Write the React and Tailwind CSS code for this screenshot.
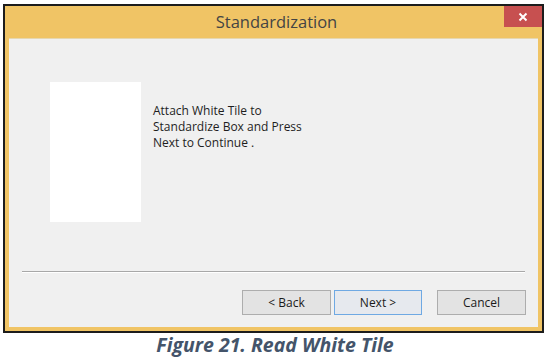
import React from 'react';

const uiFont = { fontFamily: '"Open Sans", "Noto Sans", sans-serif' };

function WinButton({ children, focused }) {
  return (
    <button
      className={
        focused
          ? 'w-[88px] h-[25px] border border-[#6fa9e3] bg-[#e6e9ee] text-[12px] text-[#1a1a1a]'
          : 'w-[89px] h-[25px] border border-[#adadad] bg-[#e3e3e3] text-[12px] text-[#1a1a1a]'
      }
      style={uiFont}
    >
      {children}
    </button>
  );
}

export default function App() {
  return (
    <div className="w-[550px] h-[358px] bg-white overflow-hidden">
      {/* Fenêtre */}
      <div className="ml-[3px] mt-[4px] w-[541px] h-[329px] border-2 border-[#1c1c1c] bg-[#f0c465] flex flex-col">
        {/* Barre de titre */}
        <div className="relative h-[32px] flex items-center justify-center">
          <span className="text-[16.5px] text-[#444444] pl-[6px]" style={uiFont}>
            Standardization
          </span>
          <div className="absolute right-0 top-0 w-[38px] h-[21px] bg-[#c75050] flex items-center justify-center">
            <svg width="10" height="10" viewBox="0 0 10 10">
              <path d="M1.5 1.5 L8.5 8.5 M8.5 1.5 L1.5 8.5" stroke="white" strokeWidth="2" />
            </svg>
          </div>
        </div>

        {/* Contenu */}
        <div className="ml-[4px] mr-[4px] mb-[4px] flex-1 bg-[#f0f0f0] border-t border-[#e6d7b0] flex flex-col">
          <div className="flex pl-[41px] pt-[43px]">
            <div className="w-[91px] h-[140px] bg-white" />
            <p className="ml-[12px] mt-[21px] text-[12px] leading-[16px] text-[#1e1e1e]" style={uiFont}>
              Attach White Tile to<br />
              Standardize Box and Press<br />
              Next to Continue .
            </p>
          </div>

          <div className="mx-[13px] mt-[49px] h-[2px] border-t border-[#a8a8a8] border-b border-b-white" />

          <div className="flex justify-end gap-[3px] pr-[12px] mt-[17px]">
            <WinButton>&lt; Back</WinButton>
            <WinButton focused>Next &gt;</WinButton>
            <div className="w-[9px]" />
            <WinButton>Cancel</WinButton>
          </div>
        </div>
      </div>

      {/* Légende */}
      <p
        className="mt-[0px] text-center text-[19.5px] font-bold italic text-[#44546a] leading-[24px]"
        style={uiFont}
      >
        Figure 21. Read White Tile
      </p>
    </div>
  );
}
